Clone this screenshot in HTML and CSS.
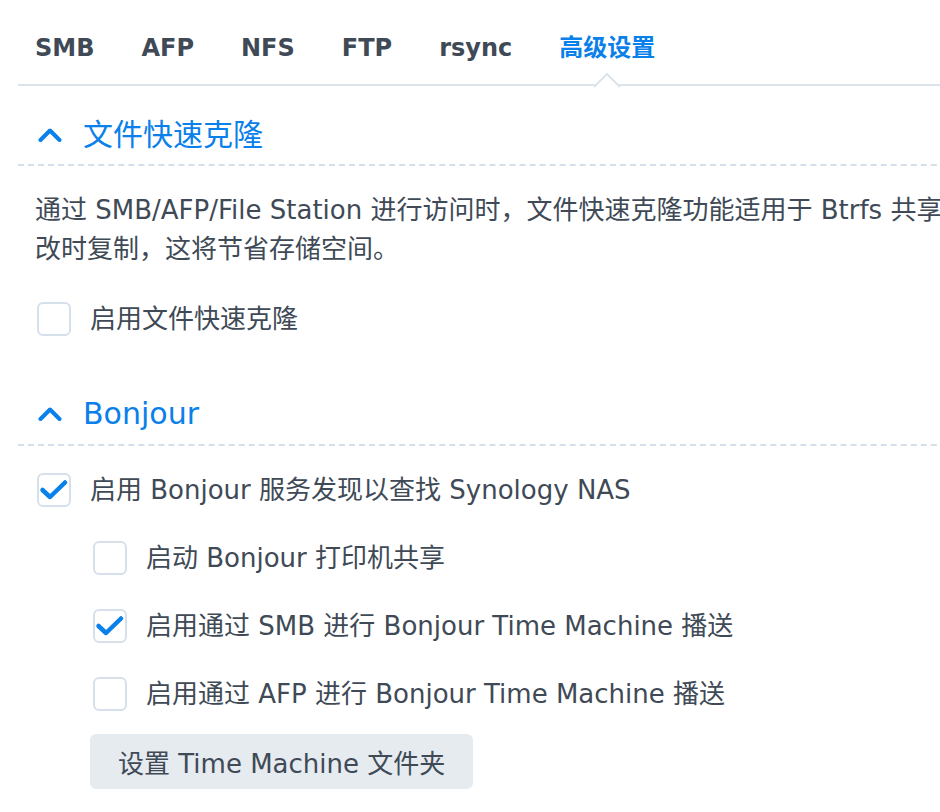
FILE: index.html
```html
<!DOCTYPE html>
<html lang="zh-CN">
<head>
  <meta charset="UTF-8">
  <title>文件服务 - 高级设置</title>
  <link rel="stylesheet" href="styles.css">
</head>
<body>
  <div class="panel">
    <div class="tabs">
      <div class="tab">SMB</div>
      <div class="tab">AFP</div>
      <div class="tab">NFS</div>
      <div class="tab">FTP</div>
      <div class="tab">rsync</div>
      <div class="tab active">高级设置
        <svg class="notch" width="26" height="15" viewBox="0 0 26 15"><polyline points="0,14 13,1 26,14" fill="#fff" stroke="#dbe3eb" stroke-width="2"/></svg>
      </div>
    </div>

    <div class="section first">
      <div class="sec-head">
        <svg class="chev" width="24" height="14" viewBox="0 0 24 14"><polyline points="2.5,12 12,2.5 21.5,12" fill="none" stroke="#0a80ea" stroke-width="4" stroke-linecap="round" stroke-linejoin="round"/></svg>
        <span>文件快速克隆</span>
      </div>
      <div class="desc">通过 SMB/AFP/File Station 进行访问时，文件快速克隆功能适用于 Btrfs 共享文件夹。复制文件时将仅在文件修<br>改时复制，这将节省存储空间。</div>
      <label class="check first-row"><span class="box"></span>启用文件快速克隆</label>
    </div>

    <div class="section second">
      <div class="sec-head">
        <svg class="chev" width="24" height="14" viewBox="0 0 24 14"><polyline points="2.5,12 12,2.5 21.5,12" fill="none" stroke="#0a80ea" stroke-width="4" stroke-linecap="round" stroke-linejoin="round"/></svg>
        <span>Bonjour</span>
      </div>
      <label class="check first-row"><span class="box"><svg viewBox="0 0 34 34"><polyline points="5.5,17 13,24 28,9.5" fill="none" stroke="#0a80ea" stroke-width="4.5" stroke-linecap="round" stroke-linejoin="round"/></svg></span>启用 Bonjour 服务发现以查找 Synology NAS</label>
      <div class="sub">
        <label class="check"><span class="box"></span>启动 Bonjour 打印机共享</label>
        <label class="check"><span class="box"><svg viewBox="0 0 34 34"><polyline points="5.5,17 13,24 28,9.5" fill="none" stroke="#0a80ea" stroke-width="4.5" stroke-linecap="round" stroke-linejoin="round"/></svg></span>启用通过 SMB 进行 Bonjour Time Machine 播送</label>
        <label class="check"><span class="box"></span>启用通过 AFP 进行 Bonjour Time Machine 播送</label>
        <button class="btn">设置 Time Machine 文件夹</button>
      </div>
    </div>
  </div>
</body>
</html>
```

FILE: styles.css
```css
html, body { margin: 0; overflow: hidden; background: #fff; }
body {
  font-family: "DejaVu Sans", "Noto Sans CJK SC", sans-serif;
  color: #404a56;
}
.panel { width: 1300px; padding-left: 18px; }

/* tabs */
.tabs {
  display: flex; align-items: center; gap: 47px;
  height: 72px; padding: 12px 0 0 17px;
  border-bottom: 2px solid #dbe3eb;
}
.tab { position: relative; font-size: 24px; font-weight: bold; line-height: 30px; color: #404a56; }
.tab.active { color: #0a80ea; }
.tab .notch { position: absolute; left: 50%; margin-left: -13px; bottom: -25px; }

/* sections */
.section.first { margin-top: 31px; }
.section.second { margin-top: 60px; }
.sec-head {
  display: flex; align-items: center; gap: 21px;
  padding: 0 0 11px 20px; line-height: 36px;
  font-size: 30px; color: #0a80ea;
  border-bottom: 2px dashed #d4dfe9;
}
.section.second .sec-head { padding-bottom: 12px; }
.desc {
  margin-top: 25px; padding-left: 17px;
  font-size: 26px; line-height: 39px; white-space: nowrap;
}

.check {
  display: flex; align-items: center; gap: 19px;
  font-size: 26px; line-height: 34px; white-space: nowrap;
  margin-left: 19px; margin-top: 34px;
}
.check.first-row { margin-top: 33px; }
.section.second .check.first-row { margin-top: 27px; }
.box {
  width: 30px; height: 30px; flex: none;
  border: 2px solid #d6e0ea; border-radius: 6px; background: #fff;
}
.box svg { display: block; width: 34px; height: 34px; margin: -2px; }

.sub { padding-left: 56px; }
.sub .check { margin-top: 34px; }
.btn {
  display: block; margin: 23px 0 0 16px;
  height: 55px; padding: 0 28px;
  border: none; border-radius: 6px; background: #e6ebf0;
  font-family: inherit; font-size: 26px; color: #404a56;
}
```
